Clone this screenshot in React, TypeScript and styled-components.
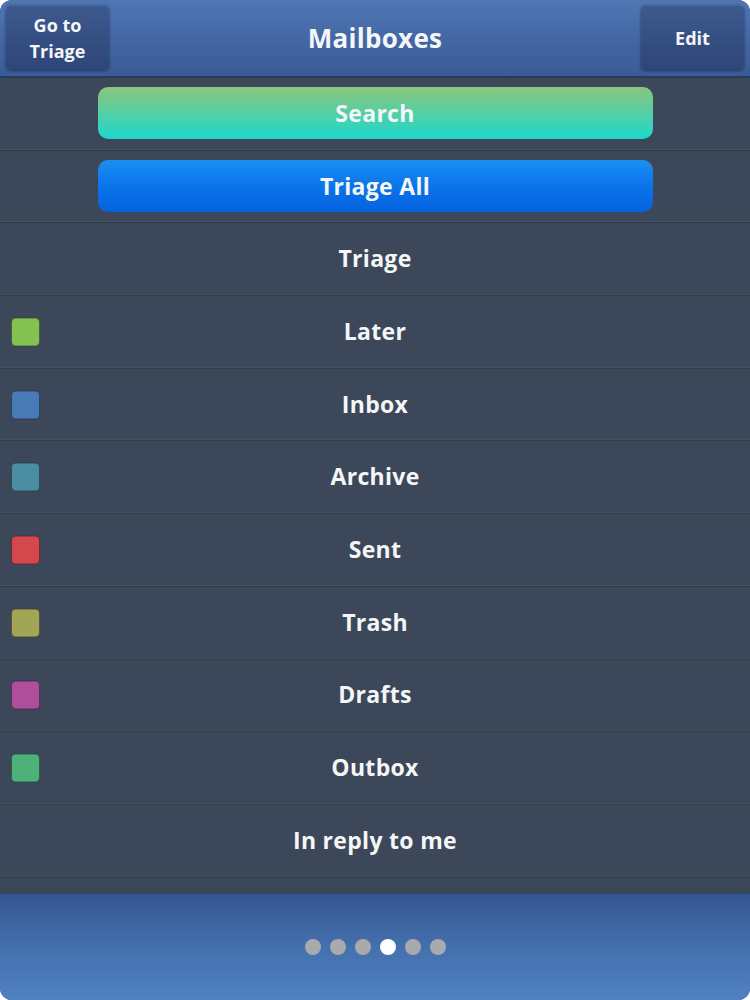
import styled, { createGlobalStyle } from "styled-components";

const GlobalStyle = createGlobalStyle`
  html, body {
    margin: 0;
    padding: 0;
    background: #ffffff;
  }
  * {
    box-sizing: border-box;
  }
`;

type Mailbox = {
  name: string;
  color?: string;
};

const MAILBOXES: Mailbox[] = [
  { name: "Triage" },
  { name: "Later", color: "#84c150" },
  { name: "Inbox", color: "#4a7ab6" },
  { name: "Archive", color: "#4b8ea2" },
  { name: "Sent", color: "#d3474d" },
  { name: "Trash", color: "#a2a556" },
  { name: "Drafts", color: "#ae4f9b" },
  { name: "Outbox", color: "#4cb27a" },
  { name: "In reply to me" },
];

const PAGES = 6;
const ACTIVE_PAGE = 3;

const App = () => {
  return (
    <>
      <GlobalStyle />
      <Frame>
        {/*--------------------------- Header -------------------------------- */}
        <Header>
          <NavButton>
            Go to
            <br />
            Triage
          </NavButton>
          <Title>Mailboxes</Title>
          <NavButton>Edit</NavButton>
        </Header>
        {/*--------------------------- List -------------------------------- */}
        <List>
          <Row>
            <ActionButton variant="search">Search</ActionButton>
          </Row>
          <Row>
            <ActionButton variant="triage">Triage All</ActionButton>
          </Row>
          {MAILBOXES.map((box) => (
            <Row key={box.name}>
              {box.color && <Swatch color={box.color} />}
              <Label>{box.name}</Label>
            </Row>
          ))}
        </List>
        {/*--------------------------- Footer -------------------------------- */}
        <Footer>
          <Dots>
            {Array.from({ length: PAGES }).map((_, i) => (
              <Dot key={i} active={i === ACTIVE_PAGE} />
            ))}
          </Dots>
        </Footer>
      </Frame>
    </>
  );
};

export default App;

const Frame = styled.div`
  height: 100vh;
  width: 100%;
  display: flex;
  flex-direction: column;
  border-radius: 12px;
  overflow: hidden;
  background: #3c4859;
  font-family: "Open Sans", "Liberation Sans", sans-serif;
  color: #f4f6f8;
`;

const Header = styled.header`
  height: 78px;
  flex-shrink: 0;
  display: flex;
  align-items: center;
  justify-content: space-between;
  padding: 0 6px;
  background: linear-gradient(180deg, #4f77b4 0%, #4569a6 45%, #3a5b95 100%);
  border-bottom: 2px solid #26395e;
`;

const NavButton = styled.div`
  width: 103px;
  height: 65px;
  margin-top: -1px;
  display: flex;
  align-items: center;
  justify-content: center;
  text-align: center;
  font-size: 18px;
  font-weight: 700;
  line-height: 26px;
  border-radius: 5px;
  background: linear-gradient(180deg, #3d5a8e 0%, #2e4577 100%);
  box-shadow: 0 1px 3px rgba(10, 20, 45, 0.55),
    inset 0 1px 0 rgba(255, 255, 255, 0.08);
`;

const Title = styled.h1`
  margin: 0;
  font-size: 26px;
  font-weight: 700;
  letter-spacing: 0.3px;
`;

const List = styled.div`
  flex: 1;
  display: flex;
  flex-direction: column;
  overflow: hidden;
`;

const Row = styled.div`
  height: 72.7px;
  flex-shrink: 0;
  position: relative;
  display: flex;
  align-items: center;
  justify-content: center;
  border-bottom: 1px solid #323d4c;
  box-shadow: inset 0 -1px 0 #434f61;
`;

const ActionButton = styled.div<{ variant: "search" | "triage" }>`
  width: 555px;
  height: 52px;
  margin-top: -2px;
  display: flex;
  align-items: center;
  justify-content: center;
  border-radius: 10px;
  font-size: 23px;
  font-weight: 700;
  letter-spacing: 0.3px;
  background: ${({ variant }) =>
    variant === "search"
      ? "linear-gradient(180deg, #8cc57c 0%, #4fd0a8 55%, #1cd8cb 100%)"
      : "linear-gradient(180deg, #1a90f2 0%, #0b74ea 50%, #0462e0 100%)"};
`;

const Swatch = styled.span<{ color: string }>`
  position: absolute;
  left: 11px;
  top: 50%;
  transform: translateY(-50%);
  width: 29px;
  height: 29px;
  border-radius: 5px;
  background: ${({ color }) => color};
  border: 1px solid rgba(20, 25, 30, 0.55);
`;

const Label = styled.span`
  font-size: 23px;
  font-weight: 700;
  letter-spacing: 0.3px;
  margin-top: -2px;
`;

const Footer = styled.footer`
  height: 107px;
  flex-shrink: 0;
  display: flex;
  align-items: center;
  justify-content: center;
  background: linear-gradient(180deg, #34558f 0%, #4470ae 50%, #5081c1 100%);
  border-top: 1px solid #2c4470;
`;

const Dots = styled.div`
  display: flex;
  gap: 9px;
  margin-top: -1px;
`;

const Dot = styled.span<{ active: boolean }>`
  width: 16px;
  height: 16px;
  border-radius: 50%;
  background: ${({ active }) => (active ? "#ffffff" : "#a9aaab")};
`;
